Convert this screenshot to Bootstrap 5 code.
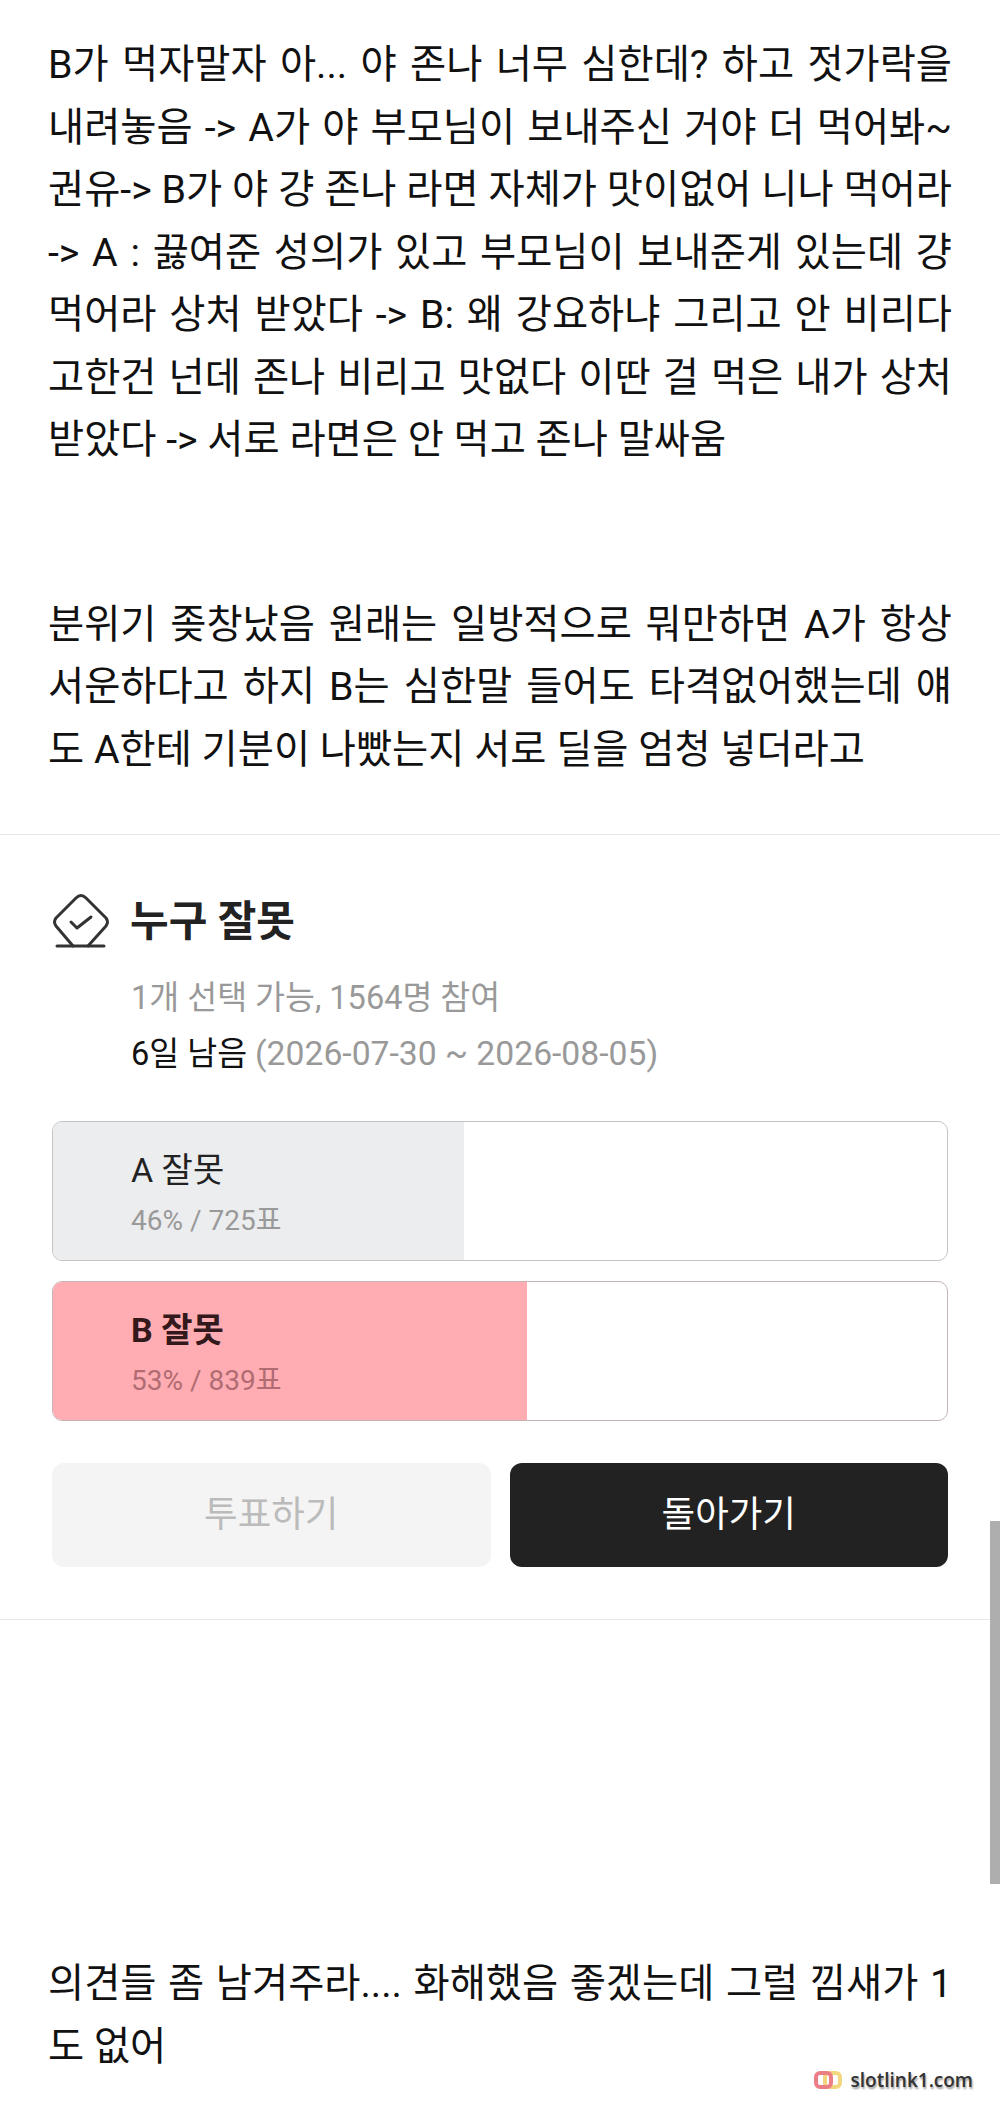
<!DOCTYPE html>
<html lang="ko">
<head>
  <meta charset="UTF-8">
  <meta name="viewport" content="width=device-width, initial-scale=1">
  <title>누구 잘못</title>
  <link href="https://cdn.jsdelivr.net/npm/bootstrap@5.3.0/dist/css/bootstrap.min.css" rel="stylesheet">
  <style>
    body {
      height: 2120px;
      overflow: hidden;
      background: #fff;
      color: #111;
      font-family: Roboto, "Noto Sans CJK KR", sans-serif;
    }

    .post-text {
      padding: 0 48px;
      font-size: 39.3px;
      line-height: 62.5px;
    }

    .post-text span {
      display: block;
      white-space: nowrap;
      text-align-last: justify;
    }

    .post-text span.line-end {
      text-align-last: left;
    }

    .first-text { padding-top: 34px; height: 834px; }
    .gap-text { margin-top: 122px; }
    .last-text { margin-top: 333px; }

    .poll-box {
      height: 786px;
      padding: 57px 52px 0 52px;
      border-top: 1px solid #e8e8e8;
      border-bottom: 1px solid #e8e8e8;
    }

    .poll-head { gap: 20px; }
    .poll-icon { width: 60px; height: 60px; margin-left: -2px; }
    .poll-title { font-size: 42px; font-weight: 700; color: #222; line-height: 60px; }
    .poll-meta { padding-left: 79px; margin-top: 18px; font-size: 32.5px; line-height: 56px; color: #999; }
    .poll-meta b { font-weight: 400; color: #111; }
    .poll-dates { font-size: 33.7px; }

    .vote-list { margin-top: 39px; gap: 20px; }

    .vote-option {
      height: 140px;
      padding: 19px 78px 0;
      border: 1px solid #c4c4c4;
      border-radius: 10px;
      overflow: hidden;
    }

    .vote-fill { background: #ecedef; }
    .vote-win .vote-fill { background: #ffadb2; }
    .vote-win { border-color: #c6b4b5; }
    .vote-name { font-size: 34px; line-height: 58px; color: #222; }
    .vote-win .vote-name { font-weight: 700; color: #33191b; }
    .vote-num { font-size: 28px; line-height: 44px; color: #999; }
    .vote-win .vote-num { color: #b06c72; }

    .vote-actions { margin-top: 42px; gap: 19px; }

    .vote-btn {
      flex: 1 1 0;
      height: 104px;
      font-size: 36.5px;
      border-radius: 12px;
      border: 0;
    }

    .btn.btn-off { background: #f4f4f4; color: #bbb; opacity: 1; }
    .btn.btn-back { background: #222; color: #fff; }

    .scroll-thumb { top: 1521px; right: 0; width: 10px; height: 363px; background: #aeaeae; }
    .wmark { right: 27px; top: 2066px; }
    .wmark-text {
      font-family: "Open Sans", sans-serif;
      font-size: 19px;
      font-weight: 600;
      color: #333;
      text-shadow: 1px 2px 2px #999;
    }
  </style>
</head>
<body class="position-relative">

  <div class="first-text post-text">
    <span>B가 먹자말자 아... 야 존나 너무 심한데? 하고 젓가락을</span>
    <span>내려놓음 -&gt; A가 야 부모님이 보내주신 거야 더 먹어봐~</span>
    <span>권유-&gt; B가 야 걍 존나 라면 자체가 맛이없어 니나 먹어라</span>
    <span>-&gt; A : 끓여준 성의가 있고 부모님이 보내준게 있는데 걍</span>
    <span>먹어라 상처 받았다 -&gt; B: 왜 강요하냐 그리고 안 비리다</span>
    <span>고한건 넌데 존나 비리고 맛없다 이딴 걸 먹은 내가 상처</span>
    <span class="line-end">받았다 -&gt; 서로 라면은 안 먹고 존나 말싸움</span>
    <div class="gap-text">
      <span>분위기 좆창났음 원래는 일방적으로 뭐만하면 A가 항상</span>
      <span>서운하다고 하지 B는 심한말 들어도 타격없어했는데 얘</span>
      <span class="line-end">도 A한테 기분이 나빴는지 서로 딜을 엄청 넣더라고</span>
    </div>
  </div>

  <!-- 투표 -->
  <div class="poll-box">
    <div class="d-flex align-items-center poll-head">
      <svg class="poll-icon" viewBox="0 0 60 60" fill="none" stroke="#333" stroke-width="3" stroke-linecap="round" stroke-linejoin="round">
        <path d="M23 54 L6 34 Q3 30 6 26 L26 6 Q31 1 36 6 L56 26 Q59 30 56 34 L38 54"/>
        <path d="M7 54 H54"/>
        <path d="M21 30 L27 36 L41 25"/>
      </svg>
      <div class="poll-title">누구 잘못</div>
    </div>
    <div class="poll-meta">
      <div>1개 선택 가능, 1564명 참여</div>
      <div><b>6일 남음</b> <span class="poll-dates">(2026-07-30 ~ 2026-08-05)</span></div>
    </div>

    <div class="d-flex flex-column vote-list">
      <div class="vote-option position-relative">
        <div class="vote-fill position-absolute top-0 bottom-0 start-0" style="width: 46%"></div>
        <div class="position-relative">
          <div class="vote-name">A 잘못</div>
          <div class="vote-num">46% / 725표</div>
        </div>
      </div>
      <div class="vote-option vote-win position-relative">
        <div class="vote-fill position-absolute top-0 bottom-0 start-0" style="width: 53%"></div>
        <div class="position-relative">
          <div class="vote-name">B 잘못</div>
          <div class="vote-num">53% / 839표</div>
        </div>
      </div>
    </div>

    <div class="d-flex vote-actions">
      <button class="btn btn-off vote-btn" disabled>투표하기</button>
      <button class="btn btn-back vote-btn">돌아가기</button>
    </div>
  </div>

  <div class="post-text last-text">
    <span>의견들 좀 남겨주라.... 화해했음 좋겠는데 그럴 낌새가 1</span>
    <span class="line-end">도 없어</span>
  </div>

  <div class="scroll-thumb position-absolute"></div>

  <div class="wmark position-absolute d-flex align-items-center gap-2">
    <svg width="30" height="20" viewBox="0 0 30 20" fill="none" stroke-width="4">
      <rect x="12" y="3" width="15" height="14" rx="4" stroke="#f3d77e"/>
      <rect x="3" y="3" width="15" height="14" rx="4" stroke="#ec7f85"/>
    </svg>
    <span class="wmark-text">slotlink1.com</span>
  </div>

</body>
</html>
